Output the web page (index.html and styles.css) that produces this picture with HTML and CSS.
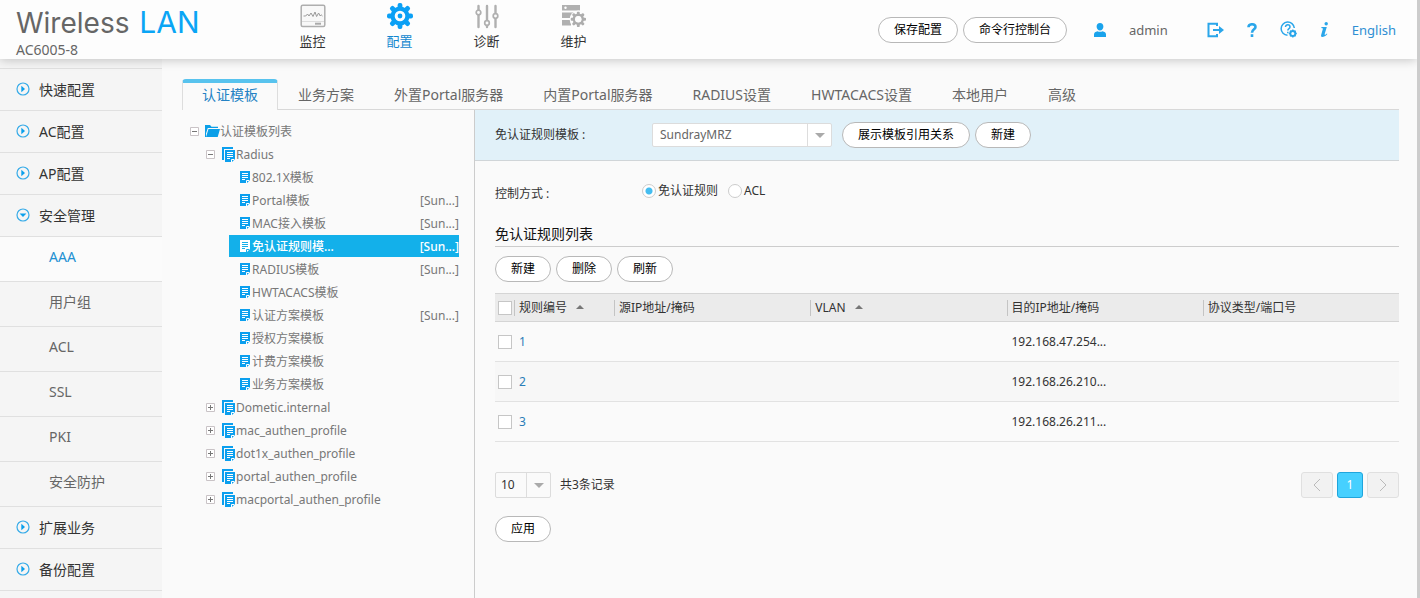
FILE: index.html
```html
<!DOCTYPE html>
<html lang="zh-CN">
<head>
<meta charset="utf-8">
<title>Wireless LAN AC6005-8</title>
<link rel="stylesheet" href="styles.css">
</head>
<body>
<svg class="sprite" aria-hidden="true">
  <symbol id="i-right" viewBox="0 0 14 14"><circle cx="7" cy="7" r="6" fill="none" stroke="#36abe8" stroke-width="1.2"/><path d="M5.3 3.8 9 7l-3.7 3.2z" fill="#0ba0ec"/></symbol>
  <symbol id="i-down" viewBox="0 0 14 14"><circle cx="7" cy="7" r="6" fill="none" stroke="#36abe8" stroke-width="1.2"/><path d="M3.6 5.4h6.8L7 9z" fill="#0ba0ec"/></symbol>
  <symbol id="i-doc" viewBox="0 0 10 12"><path d="M0 0h10v9L7 12H0z" fill="currentColor" stroke="none"/><path d="M2 2.5h6M2 4.5h6M2 6.5h6M2 8.5h3M6.500 12V9.500H9" fill="none" stroke-width="1"/></symbol>
  <symbol id="i-docs" viewBox="0 0 13 15"><path d="M1 13V1h10" fill="none" stroke="currentColor" stroke-width="2"/><path d="M3 3h10v9l-3 3H3z" fill="currentColor" stroke="none"/><path d="M5 5.500h6M5 7.500h6M5 9.500h6M5 11.500h3M9.500 15v-2.500H12" fill="none" stroke-width="1"/></symbol>
  <symbol id="i-minus" viewBox="0 0 9 9"><path d="M.5.5h8v8h-8z" fill="#fff" stroke="#c9c3c6"/><path d="M2 4.5h5" stroke="#777"/></symbol>
  <symbol id="i-plus" viewBox="0 0 9 9"><path d="M.5.5h8v8h-8z" fill="#fff" stroke="#c9c3c6"/><path d="M2 4.5h5M4.5 2v5" stroke="#777"/></symbol>
  <symbol id="i-gear" viewBox="0 0 26 26"><g fill="currentColor"><circle cx="13" cy="13" r="9.5"/><rect x="10.6" y="0" width="4.8" height="26" rx="2"/><rect x="10.6" y="0" width="4.8" height="26" rx="2" transform="rotate(45 13 13)"/><rect x="10.6" y="0" width="4.8" height="26" rx="2" transform="rotate(90 13 13)"/><rect x="10.6" y="0" width="4.8" height="26" rx="2" transform="rotate(135 13 13)"/></g><circle cx="13" cy="13" r="5.3" fill="#fdfdfd"/><circle cx="13" cy="13" r="2.4" fill="currentColor"/></symbol>
</svg>

<header class="header">
  <div class="brand">
    <h1 class="logo">Wireless <span>LAN</span></h1>
    <div class="model">AC6005-8</div>
  </div>
  <nav class="main-nav">
    <a href="#"><svg width="26" height="26" viewBox="0 0 26 26"><rect x="1.2" y="2.2" width="23.6" height="21.2" rx="1.5" fill="#f8f8f8" stroke="#aeaeae" stroke-width="1.5"/><path d="M3.5 13h2.2l1.8-2 1.5 2 2-3 2 3.5 2-4.5 1.6 4.5 2-3.5 1.6 3 1-1.2L22.5 13" fill="none" stroke="#999" stroke-width="1"/><path d="M2 18.5h22" stroke="#ddd"/><path d="M15 20.7h6" stroke="#aaa" stroke-width="2"/></svg>监控</a>
    <a href="#" class="active"><svg width="26" height="26"><use href="#i-gear"/></svg>配置</a>
    <a href="#"><svg width="26" height="26" viewBox="0 0 26 26"><g stroke="#b0b0b0" stroke-width="2.4" stroke-linecap="round" fill="#fdfdfd"><path d="M4.5 3v21M13 3v21M21.500 3v21"/><circle cx="4.500" cy="9.500" r="2.300" stroke-width="1.700"/><circle cx="13" cy="20" r="2.300" stroke-width="1.700"/><circle cx="21.500" cy="13" r="2.300" stroke-width="1.700"/></g></svg>诊断</a>
    <a href="#"><svg width="26" height="26" viewBox="0 0 26 26"><g fill="#b0b0b0"><path d="M1 2h18v5.500H1zM1 9.500h18v2h-4l-2.500 3.500H1zM1 17h9v5.500H1z"/></g><circle cx="4.500" cy="4.700" r="1.200" fill="#fff"/><g transform="translate(9.500 8.500) scale(.6)" color="#adadad"><circle cx="13" cy="13" r="14.500" fill="#fdfdfd"/><use href="#i-gear" width="26" height="26"/><circle cx="13" cy="13" r="5" fill="#fdfdfd"/></g></svg>维护</a>
  </nav>
  <div class="tools">
    <button class="btn">保存配置</button>
    <button class="btn">命令行控制台</button>
    <svg class="user" width="12" height="14" viewBox="0 0 12 14" fill="#1aa3ec"><path d="M6 0c2.200 0 3.400 1.600 3.400 3.600S8 7.600 6 7.600 2.600 5.600 2.600 3.600 3.800 0 6 0zM0 14v-2.500C0 9.500 1.500 8.600 3.500 8.200 5 9 7 9 8.500 8.200c2 .4 3.500 1.300 3.500 3.300V14z"/></svg>
    <span class="name">admin</span>
    <a href="#" class="tool" aria-label="退出"><svg width="17" height="16" viewBox="0 0 17 16" fill="none" stroke="#2aa6ea" stroke-width="2"><path d="M10 4V1.700H1.500v12.600H10V12M6 8h8"/><path d="M12 4l5 4-5 4z" fill="#2aa6ea" stroke="none"/></svg></a>
    <a href="#" class="tool" aria-label="帮助"><svg width="10" height="14" viewBox="0 0 10 14" fill="none" stroke="#2aa6ea" stroke-width="2.600"><path d="M1.500 4.300c0-4 7-4 7-.3C8.500 6.500 5 6.200 5 9.700"/><path d="M5 11.200V14"/></svg></a>
    <a href="#" class="tool" aria-label="向导"><svg width="17" height="17" viewBox="0 0 17 17" fill="none" stroke="#2aa6ea"><path d="M7.500 14.300A6.600 6.600 0 1 1 14.300 7" stroke-width="1.500"/><path d="M5.500 6c0-3 4.500-2.900 4.500 0 0 1.700-2.200 1.700-2.200 3.600M7.800 10.800v1.500" stroke-width="1.500"/><circle cx="12.800" cy="12.500" r="2.500" stroke-width="1.900"/><path d="M12.800 8.500v1.500m0 5v1.500m-4-4h1.500m5 0h1.500m-6.800-2.800 1 1m3.600 3.600 1 1m0-5.600-1 1m-3.600 3.600-1 1" stroke-width="1.400"/></svg></a>
    <a href="#" class="tool" aria-label="关于"><svg width="9" height="15" viewBox="0 0 9 15" fill="#2aa6ea"><circle cx="6.200" cy="1.700" r="1.700"/><path d="M1.500 5h5.300L4.600 12.300c0 .8 1.200.2 2.300-.9l.5.600C5.500 14.300 3.800 15 2.400 15 1 15 .8 14 1.200 12.700L3 6.600l-1.700-.5z"/></svg></a>
    <a href="#" class="lang">English</a>
  </div>
</header>

<div class="body">
  <nav class="sidebar">
    <a href="#" class="group"><svg width="14" height="14"><use href="#i-right"/></svg>快速配置</a>
    <a href="#" class="group"><svg width="14" height="14"><use href="#i-right"/></svg>AC配置</a>
    <a href="#" class="group"><svg width="14" height="14"><use href="#i-right"/></svg>AP配置</a>
    <a href="#" class="group"><svg width="14" height="14"><use href="#i-down"/></svg>安全管理</a>
    <a href="#" class="sub current">AAA</a>
    <a href="#" class="sub">用户组</a>
    <a href="#" class="sub">ACL</a>
    <a href="#" class="sub">SSL</a>
    <a href="#" class="sub">PKI</a>
    <a href="#" class="sub">安全防护</a>
    <a href="#" class="group"><svg width="14" height="14"><use href="#i-right"/></svg>扩展业务</a>
    <a href="#" class="group"><svg width="14" height="14"><use href="#i-right"/></svg>备份配置</a>
  </nav>

  <main class="content">
    <nav class="tabs">
      <a href="#" class="tab selected">认证模板</a>
      <a href="#" class="tab">业务方案</a>
      <a href="#" class="tab">外置Portal服务器</a>
      <a href="#" class="tab">内置Portal服务器</a>
      <a href="#" class="tab">RADIUS设置</a>
      <a href="#" class="tab">HWTACACS设置</a>
      <a href="#" class="tab">本地用户</a>
      <a href="#" class="tab">高级</a>
      <span class="tab-rest"></span>
    </nav>

    <div class="panes">
      <div class="tree">
        <div class="node root"><svg width="9" height="9"><use href="#i-minus"/></svg><svg class="folder" width="15" height="12" viewBox="0 0 15 12" fill="#0b9fe8"><path d="M0 0h5l1.500 1.700H13V3H2.800L1 8.500V12H0z"/><path d="M3.500 4H15l-2.300 8H1z"/></svg><span>认证模板列表</span></div>
        <div class="node mid"><svg width="9" height="9"><use href="#i-minus"/></svg><svg class="docs" width="13" height="15"><use href="#i-docs"/></svg><span>Radius</span></div>
        <div class="node leaf"><svg width="10" height="12"><use href="#i-doc"/></svg><span>802.1X模板</span></div>
        <div class="node leaf"><svg width="10" height="12"><use href="#i-doc"/></svg><span>Portal模板</span><span class="ref">[Sun...]</span></div>
        <div class="node leaf"><svg width="10" height="12"><use href="#i-doc"/></svg><span>MAC接入模板</span><span class="ref">[Sun...]</span></div>
        <div class="node leaf chosen"><svg width="10" height="12"><use href="#i-doc"/></svg><span>免认证规则模...</span><span class="ref">[Sun...]</span></div>
        <div class="node leaf"><svg width="10" height="12"><use href="#i-doc"/></svg><span>RADIUS模板</span><span class="ref">[Sun...]</span></div>
        <div class="node leaf"><svg width="10" height="12"><use href="#i-doc"/></svg><span>HWTACACS模板</span></div>
        <div class="node leaf"><svg width="10" height="12"><use href="#i-doc"/></svg><span>认证方案模板</span><span class="ref">[Sun...]</span></div>
        <div class="node leaf"><svg width="10" height="12"><use href="#i-doc"/></svg><span>授权方案模板</span></div>
        <div class="node leaf"><svg width="10" height="12"><use href="#i-doc"/></svg><span>计费方案模板</span></div>
        <div class="node leaf"><svg width="10" height="12"><use href="#i-doc"/></svg><span>业务方案模板</span></div>
        <div class="node mid"><svg width="9" height="9"><use href="#i-plus"/></svg><svg class="docs" width="13" height="15"><use href="#i-docs"/></svg><span>Dometic.internal</span></div>
        <div class="node mid"><svg width="9" height="9"><use href="#i-plus"/></svg><svg class="docs" width="13" height="15"><use href="#i-docs"/></svg><span>mac_authen_profile</span></div>
        <div class="node mid"><svg width="9" height="9"><use href="#i-plus"/></svg><svg class="docs" width="13" height="15"><use href="#i-docs"/></svg><span>dot1x_authen_profile</span></div>
        <div class="node mid"><svg width="9" height="9"><use href="#i-plus"/></svg><svg class="docs" width="13" height="15"><use href="#i-docs"/></svg><span>portal_authen_profile</span></div>
        <div class="node mid"><svg width="9" height="9"><use href="#i-plus"/></svg><svg class="docs" width="13" height="15"><use href="#i-docs"/></svg><span>macportal_authen_profile</span></div>
      </div>

      <section class="detail">
        <div class="profile-bar">
          <label class="field-label" for="profile">免认证规则模板 :</label>
          <span class="select profile"><select id="profile"><option>SundrayMRZ</option></select></span>
          <button class="btn">展示模板引用关系</button>
          <button class="btn">新建</button>
        </div>
        <div class="form">
          <div class="mode">
            <span class="mode-label" id="mode-label">控制方式 :</span>
            <div class="radios" role="radiogroup" aria-labelledby="mode-label">
              <label><input type="radio" name="mode" checked>免认证规则</label>
              <label><input type="radio" name="mode">ACL</label>
            </div>
          </div>
          <h2 class="title">免认证规则列表</h2>
          <div class="actions">
            <button class="btn">新建</button>
            <button class="btn">删除</button>
            <button class="btn">刷新</button>
          </div>
          <table class="rules">
            <colgroup><col class="c-check"><col class="c-id"><col><col><col><col></colgroup>
            <thead>
              <tr><th><input type="checkbox" aria-label="全选"></th><th><span class="sort">规则编号</span></th><th><span>源IP地址/掩码</span></th><th><span class="sort">VLAN</span></th><th><span>目的IP地址/掩码</span></th><th><span>协议类型/端口号</span></th></tr>
            </thead>
            <tbody>
              <tr><td><input type="checkbox" aria-label="选择规则 1"></td><td><a href="#">1</a></td><td></td><td></td><td>192.168.47.254...</td><td></td></tr>
              <tr><td><input type="checkbox" aria-label="选择规则 2"></td><td><a href="#">2</a></td><td></td><td></td><td>192.168.26.210...</td><td></td></tr>
              <tr><td><input type="checkbox" aria-label="选择规则 3"></td><td><a href="#">3</a></td><td></td><td></td><td>192.168.26.211...</td><td></td></tr>
            </tbody>
          </table>
          <div class="pager">
            <span class="select size"><select aria-label="每页记录数"><option>10</option></select></span>
            <span>共3条记录</span>
            <div class="pages">
              <button class="arrow" aria-label="上一页"><svg width="8" height="14" viewBox="0 0 8 14"><path d="M7 1 1 7l6 6"/></svg></button>
              <button class="page">1</button>
              <button class="arrow" aria-label="下一页"><svg width="8" height="14" viewBox="0 0 8 14"><path d="m1 1 6 6-6 6"/></svg></button>
            </div>
          </div>
          <button class="btn">应用</button>
        </div>
      </section>
    </div>
  </main>
</div>
</body>
</html>
```
FILE: styles.css
```css
* { box-sizing: border-box; }

body {
  margin: 0;
  min-height: 100vh;
  display: flex;
  flex-direction: column;
  overflow: hidden;
  border-right: 3px solid #ccc;
  background: #fafafa;
  color: #333;
  font: 12px/16px "Noto Sans", "Noto Sans CJK SC", sans-serif;
}

a { color: inherit; text-decoration: none; }
svg { display: block; flex: none; }
.sprite { position: absolute; width: 0; height: 0; }
button, select, input { font: inherit; margin: 0; }

/* Header */
.header {
  position: relative;
  display: flex;
  height: 59px;
  background: #fdfdfd;
  box-shadow: 0 1px 10px rgba(0, 0, 0, .22);
}
.brand { width: 269px; padding: 8px 0 0 16px; }
.logo {
  margin: 0;
  color: #666;
  font: 400 28px/28px Inter, sans-serif;
  white-space: nowrap;
}
.logo span { margin-left: 2px; color: #0aa5f5; font-size: 30px; }
.model { margin-top: 4px; color: #666; font-size: 14px; line-height: 18px; }
.main-nav { display: flex; }
.main-nav a {
  width: 87px;
  padding-top: 3px;
  display: flex;
  flex-direction: column;
  align-items: center;
  gap: 3px;
  font-size: 13px;
  line-height: 18px;
}
.main-nav .active { color: #1287cf; }
.main-nav .active svg { color: #0ba0f5; }
.tools {
  flex: 1;
  display: flex;
  justify-content: flex-end;
  align-items: center;
  gap: 5px;
  padding-right: 21px;
}
.user { margin-left: 22px; }
.name { margin: 0 34px 0 18px; color: #666; font-size: 13px; }
.tool { margin-right: 18px; }
.lang { color: #2f8fd3; font-size: 13px; }

.btn {
  height: 26px;
  padding: 0 15px;
  border: 1px solid #b8b8b8;
  border-radius: 13px;
  background: #fff;
  color: #000;
  line-height: 24px;
  white-space: nowrap;
}

/* Sidebar */
.body { flex: 1; display: flex; }
.sidebar {
  width: 162px;
  padding-top: 9px;
  background: #f5f5f5;
  font-size: 14px;
}
.sidebar a {
  display: flex;
  align-items: center;
  border-top: 1px solid #e0e0e0;
}
.group { height: 42px; padding-left: 16px; gap: 9px; }
.group:last-child { height: 43px; border-bottom: 1px solid #e0e0e0; }
.group svg { margin-bottom: 2px; }
.sub { height: 45px; padding: 0 0 4px 49px; color: #666; }
.current { background: #fbfbfb; color: #2290d2; }

/* Tabs */
.content {
  flex: 1;
  min-width: 0;
  padding: 20px 18px 0 20px;
  display: flex;
  flex-direction: column;
}
.tabs { display: flex; height: 31px; }
.tab {
  padding: 7px 20px 0;
  border-bottom: 1px solid #d8d8d8;
  color: #666;
  font-size: 14px;
  line-height: 18px;
  white-space: nowrap;
}
.selected {
  padding: 3px 19px 0;
  border: 1px solid #ddd;
  border-top: 4px solid #58c3ee;
  border-bottom: 0;
  border-radius: 4px 4px 0 0;
  color: #2482c4;
}
.tab-rest { flex: 1; border-bottom: 1px solid #d8d8d8; }
.panes { flex: 1; display: flex; }

/* Template tree */
.tree {
  width: 293px;
  padding: 10px 15px 0 8px;
  display: flex;
  flex-direction: column;
  gap: 1px;
  border-right: 1px solid #ccc;
  color: #777;
}
.node { display: flex; align-items: center; height: 22px; }
.node span { padding-top: 2px; }
.mid { padding-left: 16px; }
.leaf { margin-left: 39px; padding-left: 11px; gap: 2px; }
.folder { margin-left: 6px; }
.docs { margin: 0 1px 0 7px; }
.leaf svg, .docs { color: #0b9fee; stroke: #fff; }
.ref { margin-left: auto; }
.chosen { background: #13b0ea; color: #fff; font-weight: 500; }
.chosen svg { color: #fff; stroke: #13b0ea; }

/* Detail pane */
.detail { flex: 1; min-width: 0; }
.profile-bar {
  height: 51px;
  padding-left: 20px;
  display: flex;
  align-items: center;
  border-bottom: 1px solid #d0d5d8;
  background: #e1f1f9;
}
.field-label { width: 157px; }
.profile-bar .btn { margin-right: 5px; }
.select { position: relative; display: block; }
.select select {
  width: 100%;
  height: 24px;
  padding: 0 30px 0 7px;
  appearance: none;
  border: 1px solid #dcdcdc;
  border-radius: 2px;
  background: #fff;
  color: #666;
}
.select::before {
  content: "";
  position: absolute;
  top: 1px;
  bottom: 1px;
  right: 24px;
  border-left: 1px solid #ddd;
}
.select::after {
  content: "";
  position: absolute;
  top: 50%;
  right: 7px;
  margin-top: -2px;
  border: 5px solid transparent;
  border-top-color: #aaa;
  border-bottom: 0;
}
.profile { width: 180px; margin-right: 10px; }
.size { width: 56px; }
.size select { height: 26px; padding-left: 5px; background: #fafafa; color: #333; }

.form { padding: 22px 0 0 20px; }
.mode { display: flex; height: 40px; }
.mode-label { width: 147px; padding-top: 3px; }
.radios { display: flex; gap: 10px; }
.radios label { display: flex; align-items: center; height: 16px; gap: 2px; }
.radios input {
  appearance: none;
  width: 14px;
  height: 14px;
  border: 1px solid #ccc;
  border-radius: 50%;
  background: #fff;
}
.radios input:checked { background: radial-gradient(circle, #45bdf0 3px, #fff 4px); }
.title {
  margin: 0;
  height: 24px;
  border-bottom: 1px solid #ccc;
  color: #111;
  font-size: 14px;
  font-weight: 400;
  line-height: 22px;
}
.actions { display: flex; gap: 5px; padding: 9px 0 11px; }

.rules { width: 100%; table-layout: fixed; border-collapse: collapse; }
.c-check { width: 19px; }
.c-id { width: 100px; }
.rules th, .rules td { padding: 0; text-align: left; font-weight: 400; }
.rules th {
  height: 28px;
  border-top: 1px solid #d5d5d5;
  border-bottom: 1px solid #d5d5d5;
  background: #ebebeb;
}
.rules th span { display: block; padding-left: 4px; border-left: 1px solid #c4c4c4; }
.rules td { height: 40px; padding-left: 5px; border-bottom: 1px solid #e2e2e2; }
.rules td:first-child, .rules th:first-child { padding-left: 3px; }
.rules tbody tr:nth-child(even) { background: #f7f7f7; }
.rules input {
  display: block;
  appearance: none;
  width: 14px;
  height: 14px;
  border: 1px solid #c6c6c6;
  background: #fff;
}
.rules a { color: #2a7db8; }
.sort::after {
  content: "";
  display: inline-block;
  margin: 0 0 3px 9px;
  border: 4px solid transparent;
  border-top: 0;
  border-bottom-color: #777;
}

.pager { display: flex; align-items: center; gap: 9px; padding: 30px 0 18px; }
.pages { display: flex; gap: 4px; margin-left: auto; }
.pages button {
  display: flex;
  align-items: center;
  justify-content: center;
  width: 32px;
  height: 26px;
  padding: 0;
  border: 1px solid #e0e0e0;
  border-radius: 3px;
  background: #f2f2f2;
}
.pages svg { fill: none; stroke: #bbb; }
.pages .page { width: 26px; border-color: #1fa5dc; background: #46d0ff; color: #fff; }
```
